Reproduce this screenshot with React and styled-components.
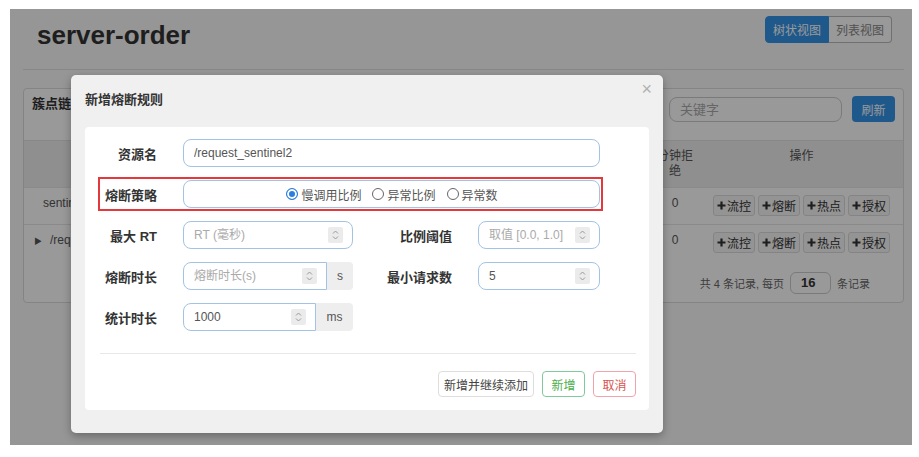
import React from "react";
import styled, { createGlobalStyle, css } from "styled-components";

const GlobalStyle = createGlobalStyle`
  html, body { margin: 0; padding: 0; background: #fff; }
  body {
    font-family: "Liberation Sans", "Noto Sans CJK SC", sans-serif;
    color: #333;
  }
  * { box-sizing: border-box; }
`;

const Frame = styled.div`
  position: relative;
  width: 902px;
  height: 436px;
  margin: 9px 0 0 10px;
  overflow: hidden;
  background: #fafafa;
  padding: 0 8px 0 13px;
`;

const TopBar = styled.header`
  display: flex;
  justify-content: space-between;
  align-items: flex-start;
  height: 61px;
  padding: 0 12px 0 14px;
  border-bottom: 1px solid #e2e2e2;
`;

const Title = styled.h1`
  margin: 13px 0 0;
  font-size: 26px;
  line-height: 26px;
  font-weight: 700;
  color: #333;
`;

const Toggle = styled.div`
  display: flex;
  margin-top: 7px;
`;

const ToggleButton = styled.button`
  height: 27px;
  padding: 0 7px;
  font: 12px "Liberation Sans", "Noto Sans CJK SC", sans-serif;
  border: 1px solid ${p => (p.$active ? "#3494e8" : "#bbb")};
  background: ${p => (p.$active ? "#3494e8" : "#fff")};
  color: ${p => (p.$active ? "#fff" : "#888")};
  &:first-child { border-radius: 4px 0 0 4px; }
  &:last-child { border-radius: 0 4px 4px 0; border-left: none; }
`;

const Panel = styled.section`
  margin-top: 18px;
  background: #fff;
  border: 1px solid #dcdcdc;
  border-radius: 4px;
`;

const PanelHeader = styled.div`
  display: flex;
  align-items: flex-start;
  height: 51px;
  padding: 0 8px;
`;

const PanelTitle = styled.div`
  margin-top: 8px;
  font-size: 13px;
  line-height: 14px;
  font-weight: 700;
  color: #333;
`;

const Search = styled.input`
  margin: 8px 0 0 auto;
  width: 173px;
  height: 25px;
  padding: 0 10px;
  border: 1px solid #ccc;
  border-radius: 8px;
  font: 13px "Liberation Sans", "Noto Sans CJK SC", sans-serif;
  &::placeholder { color: #aaa; }
`;

const RefreshButton = styled.button`
  margin: 7px 0 0 10px;
  height: 26px;
  width: 43px;
  padding: 0;
  border: none;
  border-radius: 4px;
  background: #3494e8;
  color: #fff;
  font: 12px "Liberation Sans", "Noto Sans CJK SC", sans-serif;
`;

const Table = styled.table`
  width: 100%;
  border-collapse: collapse;
  table-layout: fixed;
  font-size: 12px;
  color: #555;

  th, td {
    padding: 8px 4px;
    line-height: 15px;
    vertical-align: top;
    text-align: center;
    overflow: hidden;
    white-space: nowrap;
  }
  th {
    height: 46px;
    background: #efefef;
    font-weight: normal;
    white-space: normal;
    border-top: 1px solid #e3e3e3;
  }
  td {
    height: 37px;
    border-top: 1px solid #e6e6e6;
  }
`;

const ResourceCell = styled.td`
  && {
    text-align: left;
    padding-left: ${p => (p.$tree ? "10px" : "19px")};
  }
`;

const Caret = styled.span`
  font-size: 8px;
  margin-right: 8px;
  color: #555;
`;

const OpsCell = styled.td`
  && { padding-top: 7px; }
`;

const Ops = styled.div`
  display: flex;
  justify-content: center;
  gap: 3px;
`;

const OpButton = styled.button`
  display: flex;
  align-items: center;
  gap: 1px;
  height: 21px;
  padding: 0 3px;
  border: 1px solid #ddd;
  border-radius: 3px;
  background: #f7f7f7;
  color: #333;
  font: 12px "Liberation Sans", "Noto Sans CJK SC", sans-serif;
`;

const Pager = styled.div`
  display: flex;
  justify-content: flex-end;
  align-items: center;
  gap: 6px;
  padding: 10px 33px 8px 0;
  font-size: 11px;
  color: #666;
`;

const PageSize = styled.input`
  width: 41px;
  height: 22px;
  padding: 0 10px;
  border: 1px solid #ccc;
  border-radius: 6px;
  font: bold 13px "Liberation Sans", sans-serif;
  color: #333;
`;

const Overlay = styled.div`
  position: absolute;
  inset: 0;
  background: rgba(0, 0, 0, 0.4);
`;

const Modal = styled.div`
  position: absolute;
  left: 61px;
  top: 66px;
  width: 592px;
  height: 358px;
  background: #f0f0f0;
  border-radius: 5px;
  box-shadow: 0 3px 9px rgba(0, 0, 0, 0.3);
`;

const ModalHeader = styled.div`
  display: flex;
  justify-content: space-between;
  align-items: flex-start;
  height: 52px;
  padding: 0 11px 0 14px;
`;

const ModalTitle = styled.h4`
  margin: 17px 0 0;
  font-size: 13px;
  line-height: 16px;
  font-weight: 700;
  color: #333;
`;

const Close = styled.button`
  margin-top: 5px;
  padding: 0;
  border: none;
  background: none;
  font: 18px/18px "Liberation Sans", sans-serif;
  color: #b0b0b0;
`;

const Card = styled.div`
  margin: 0 14px;
  height: 283px;
  padding: 12px 0 13px;
  background: #fff;
  border-radius: 4px;
`;

const Form = styled.div`
  display: flex;
  flex-direction: column;
  gap: 13px;
`;

const Row = styled.div`
  position: relative;
  display: grid;
  grid-template-columns: 72px 170px 73px 122px;
  column-gap: 26px;
  align-items: center;
  height: 28px;

  ${p =>
    p.$highlight &&
    css`
      &::after {
        content: "";
        position: absolute;
        left: 13px;
        right: 46px;
        top: -3px;
        bottom: -3px;
        border: 2px solid #e4393c;
        pointer-events: none;
      }
    `}
`;

const Label = styled.label`
  text-align: right;
  font-size: 13px;
  font-weight: 700;
  color: #333;
  white-space: nowrap;
`;

const Field = styled.div`
  display: flex;
  align-items: center;
  height: 28px;
  padding: 0 9px 0 10px;
  border: 1px solid #a3c3e4;
  border-radius: ${p => (p.$grouped ? "8px 0 0 8px" : "8px")};
  background: #fff;
  ${p => p.$wide && css`grid-column: 2 / -1;`}
  ${p => p.$center && css`justify-content: center;`}
`;

const TextInput = styled.input`
  flex: 1;
  min-width: 0;
  padding: 0;
  border: none;
  outline: none;
  background: transparent;
  font: 12px "Liberation Sans", "Noto Sans CJK SC", sans-serif;
  color: #555;
  &::placeholder { color: #aaa; }
`;

const SpinBox = styled.span`
  display: flex;
  width: 15px;
  height: 16px;
  background: #ebebeb;
  border-radius: 2px;
`;

const Group = styled.div`
  display: flex;
  > ${Field} { width: ${p => p.$inputWidth}px; }
`;

const Addon = styled.span`
  flex: 1;
  display: flex;
  align-items: center;
  justify-content: center;
  height: 28px;
  background: #eee;
  border-radius: 0 4px 4px 0;
  font-size: 12px;
  color: #555;
`;

const Radios = styled.div`
  display: flex;
  align-items: center;
  gap: 11px;
`;

const RadioOption = styled.span`
  display: flex;
  align-items: center;
  gap: 3px;
  font-size: 12px;
  color: #555;
`;

const RadioDot = styled.span`
  width: 12px;
  height: 12px;
  border-radius: 50%;
  ${p =>
    p.$checked
      ? css`
          border: 1.5px solid #2b7de0;
          background: #2b7de0;
          box-shadow: inset 0 0 0 2px #fff;
        `
      : css`
          border: 1px solid #666;
          background: #fff;
        `}
`;

const Footer = styled.div`
  display: flex;
  justify-content: flex-end;
  gap: 8px;
  margin: 22px 13px 0 15px;
  padding-top: 17px;
  border-top: 1px solid #e8e8e8;
`;

const variants = {
  default: css`border-color: #ddd; color: #444;`,
  success: css`border-color: #80c99a; color: #4cae4c;`,
  danger: css`border-color: #f0a3ab; color: #d9534f;`,
};

const Button = styled.button`
  height: 26px;
  min-width: 43px;
  padding: 0 5px;
  border: 1px solid;
  border-radius: 4px;
  background: #fff;
  font: 12px "Liberation Sans", "Noto Sans CJK SC", sans-serif;
  ${p => variants[p.$variant || "default"]}
`;

const Spinner = () => (
  <SpinBox>
    <svg width="15" height="16" viewBox="0 0 15 16">
      <path d="M5 6.5 L7.5 4 L10 6.5" fill="none" stroke="#999" strokeWidth="1" />
      <path d="M5 9.5 L7.5 12 L10 9.5" fill="none" stroke="#999" strokeWidth="1" />
    </svg>
  </SpinBox>
);

const Plus = () => (
  <svg width="9" height="9" viewBox="0 0 9 9">
    <path d="M4.5 0.5v8M0.5 4.5h8" stroke="#333" strokeWidth="2.2" />
  </svg>
);

const NumberField = ({ value, placeholder, grouped }) => (
  <Field $grouped={grouped}>
    <TextInput defaultValue={value} placeholder={placeholder} />
    <Spinner />
  </Field>
);

const opNames = ["流控", "熔断", "热点", "授权"];

const OpCell = () => (
  <OpsCell>
    <Ops>
      {opNames.map(n => (
        <OpButton key={n}>
          <Plus />
          {n}
        </OpButton>
      ))}
    </Ops>
  </OpsCell>
);

// columns between the resource name and the reject count sit under the dialog
const HiddenCells = () => (
  <>
    <td />
    <td />
    <td />
    <td />
  </>
);

export default function App() {
  return (
    <>
      <GlobalStyle />
      <Frame>
        <TopBar>
          <Title>server-order</Title>
          <Toggle>
            <ToggleButton $active>树状视图</ToggleButton>
            <ToggleButton>列表视图</ToggleButton>
          </Toggle>
        </TopBar>

        <Panel>
          <PanelHeader>
            <PanelTitle>簇点链路</PanelTitle>
            <Search placeholder="关键字" />
            <RefreshButton>刷新</RefreshButton>
          </PanelHeader>
          <Table>
            <colgroup>
              <col style={{ width: 190 }} />
              <col />
              <col />
              <col />
              <col />
              <col style={{ width: 50 }} />
              <col style={{ width: 203 }} />
            </colgroup>
            <thead>
              <tr>
                <th />
                <th />
                <th />
                <th />
                <th />
                <th>分钟拒绝</th>
                <th>操作</th>
              </tr>
            </thead>
            <tbody>
              <tr>
                <ResourceCell>sentinel_default_context</ResourceCell>
                <HiddenCells />
                <td>0</td>
                <OpCell />
              </tr>
              <tr>
                <ResourceCell $tree>
                  <Caret>▶</Caret>/request_sentinel2
                </ResourceCell>
                <HiddenCells />
                <td>0</td>
                <OpCell />
              </tr>
            </tbody>
          </Table>
          <Pager>
            <span>共 4 条记录, 每页</span>
            <PageSize defaultValue="16" />
            <span>条记录</span>
          </Pager>
        </Panel>

        <Overlay />

        <Modal>
          <ModalHeader>
            <ModalTitle>新增熔断规则</ModalTitle>
            <Close>×</Close>
          </ModalHeader>
          <Card>
            <Form>
              <Row>
                <Label>资源名</Label>
                <Field $wide>
                  <TextInput defaultValue="/request_sentinel2" />
                </Field>
              </Row>
              <Row $highlight>
                <Label>熔断策略</Label>
                <Field $wide $center>
                  <Radios>
                    <RadioOption>
                      <RadioDot $checked />
                      慢调用比例
                    </RadioOption>
                    <RadioOption>
                      <RadioDot />
                      异常比例
                    </RadioOption>
                    <RadioOption>
                      <RadioDot />
                      异常数
                    </RadioOption>
                  </Radios>
                </Field>
              </Row>
              <Row>
                <Label>最大 RT</Label>
                <NumberField placeholder="RT (毫秒)" />
                <Label>比例阈值</Label>
                <NumberField placeholder="取值 [0.0, 1.0]" />
              </Row>
              <Row>
                <Label>熔断时长</Label>
                <Group $inputWidth={144}>
                  <NumberField grouped placeholder="熔断时长(s)" />
                  <Addon>s</Addon>
                </Group>
                <Label>最小请求数</Label>
                <NumberField value="5" />
              </Row>
              <Row>
                <Label>统计时长</Label>
                <Group $inputWidth={133}>
                  <NumberField grouped value="1000" />
                  <Addon>ms</Addon>
                </Group>
              </Row>
            </Form>
            <Footer>
              <Button>新增并继续添加</Button>
              <Button $variant="success">新增</Button>
              <Button $variant="danger">取消</Button>
            </Footer>
          </Card>
        </Modal>
      </Frame>
    </>
  );
}
